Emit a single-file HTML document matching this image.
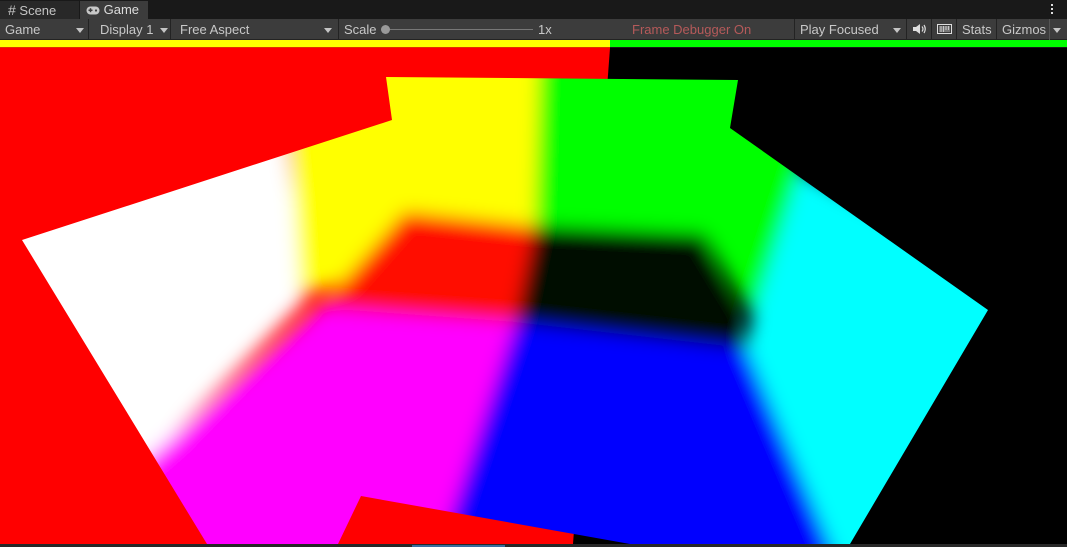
<!DOCTYPE html>
<html><head><meta charset="utf-8"><style>
*{margin:0;padding:0;box-sizing:border-box}
html,body{width:1067px;height:547px;overflow:hidden}
body{background:#191919;font-family:"Liberation Sans",sans-serif;font-size:13px;color:#c8c8c8;position:relative}
.abs{position:absolute}
.tabs{left:0;top:0;width:1067px;height:19px;background:#191919}
.tab{top:1px;height:18px;line-height:18px;padding-left:8px;overflow:hidden}
.tb{left:0;top:19px;width:1067px;height:21px;background:#3c3c3c;border-bottom:1px solid #232323}
.it{top:19px;height:21px;line-height:21px;padding-left:5px;border-right:1px solid #232323;overflow:hidden}
.arr{position:absolute;top:9px;width:0;height:0;border-left:4px solid transparent;border-right:4px solid transparent;border-top:5px solid #c4c4c4}
</style></head><body>
<div class="abs tabs"></div>
<div class="abs tab" style="left:0;width:79px;background:#282828;color:#c4c4c4"><span style="font-size:14px">#</span> Scene</div>
<div class="abs tab" style="left:80px;width:68px;background:#3c3c3c;color:#ddd;padding-left:6px">
<svg width="14" height="9" style="vertical-align:-1px" viewBox="0 0 14 9"><rect x="0.5" y="0.5" width="13" height="8" rx="4" fill="#c8c8c8"/><rect x="2.5" y="3.5" width="4" height="1.5" fill="#3c3c3c"/><rect x="3.75" y="2.2" width="1.5" height="4" fill="#3c3c3c"/><circle cx="10" cy="4.5" r="1.1" fill="#3c3c3c"/></svg> Game</div>
<div class="abs" style="left:1051px;top:4px;width:2px;height:2px;background:#ddd"></div>
<div class="abs" style="left:1051px;top:8px;width:2px;height:2px;background:#ddd"></div>
<div class="abs" style="left:1051px;top:12px;width:2px;height:2px;background:#ddd"></div>
<div class="abs tb"></div>
<div class="abs it" style="left:0;width:89px">Game<span class="arr" style="left:76px"></span></div>
<div class="abs it" style="left:89px;width:82px;padding-left:11px">Display 1<span class="arr" style="left:71px"></span></div>
<div class="abs it" style="left:171px;width:168px;padding-left:9px">Free Aspect<span class="arr" style="left:153px"></span></div>
<div class="abs it" style="left:339px;width:456px">Scale
<div class="abs" style="left:44px;top:10px;width:150px;height:1px;background:#777"></div>
<div class="abs" style="left:42px;top:6px;width:9px;height:9px;border-radius:50%;background:#999"></div>
<span class="abs" style="left:199px;top:0">1x</span>
<span class="abs" style="left:293px;top:0;color:#b55a5a">Frame Debugger On</span></div>
<div class="abs it" style="left:795px;width:112px">Play Focused<span class="arr" style="left:98px"></span></div>
<div class="abs it" style="left:907px;width:25px;padding-left:6px"><svg width="14" height="10" viewBox="0 0 14 10"><rect x="0" y="3" width="3" height="4" fill="#ddd"/><path d="M3 3 L7 0 L7 10 L3 7Z" fill="#ddd"/><path d="M9 2.5 Q11 5 9 7.5 M11 1 Q13.5 5 11 9" stroke="#ddd" fill="none" stroke-width="1.2"/></svg></div>
<div class="abs it" style="left:932px;width:25px;padding-left:5px"><svg width="15" height="10" viewBox="0 0 15 10"><rect x="0.5" y="0.5" width="14" height="9" fill="none" stroke="#ddd"/><path d="M2 3h11M2 5h11M2 7h11M4 2v6M6.5 2v6M9 2v4M11.5 2v4" stroke="#ddd" stroke-width="0.8"/></svg></div>
<div class="abs it" style="left:957px;width:40px">Stats</div>
<div class="abs it" style="left:997px;width:53px;border-right:1px solid #555">Gizmos</div>
<span class="arr abs" style="left:1053px;top:28px"></span>
<div class="abs" style="left:0;top:40px;width:610px;height:7px;background:#ffff00"></div>
<div class="abs" style="left:610px;top:40px;width:457px;height:7px;background:#00ff00"></div>
<div class="abs" style="left:0;top:47px;width:610px;height:1px;background:#e03000"></div>
<svg class="abs" style="left:0;top:48px" width="1067" height="496" viewBox="0 48 1067 496">
<defs>
<clipPath id="c"><polygon points="22,240 392,120 386,77 738,80 730,128 988,310 850,544 630,544 361,496 338,544 207,544"/></clipPath>
<filter id="b" x="-10%" y="-10%" width="120%" height="120%"><feGaussianBlur stdDeviation="9"/></filter>
</defs>
<rect x="0" y="48" width="1067" height="496" fill="#000"/>
<polygon points="0,48 610,48 573,544 0,544" fill="#ff0000"/>
<g clip-path="url(#c)">
<g filter="url(#b)">
<polygon points="-20,180 285,120 305,300 140,470 -20,470" fill="#fff"/>
<polygon points="285,40 540,40 535,228 300,295 290,140" fill="#ffff00"/>
<polygon points="540,40 810,40 800,175 755,320 703,234 535,228" fill="#00ff00"/>
<polygon points="800,170 1020,280 1020,580 845,580 745,345 755,310" fill="#00ffff"/>
<polygon points="-20,440 140,465 320,308 515,322 430,580 -20,580" fill="#ff00ff"/>
<polygon points="515,322 745,345 845,580 430,580" fill="#0000ff"/>
<polygon points="405,212 535,226 515,322 320,308" fill="#ff0a00"/>
<polygon points="535,226 703,234 745,348 515,322" fill="#031000"/>
</g>
</g>
</svg>
<div class="abs" style="left:0;top:544px;width:1067px;height:3px;background:#282828"></div>
<div class="abs" style="left:412px;top:545px;width:93px;height:2px;background:#3a6e9e"></div>
</body></html>
